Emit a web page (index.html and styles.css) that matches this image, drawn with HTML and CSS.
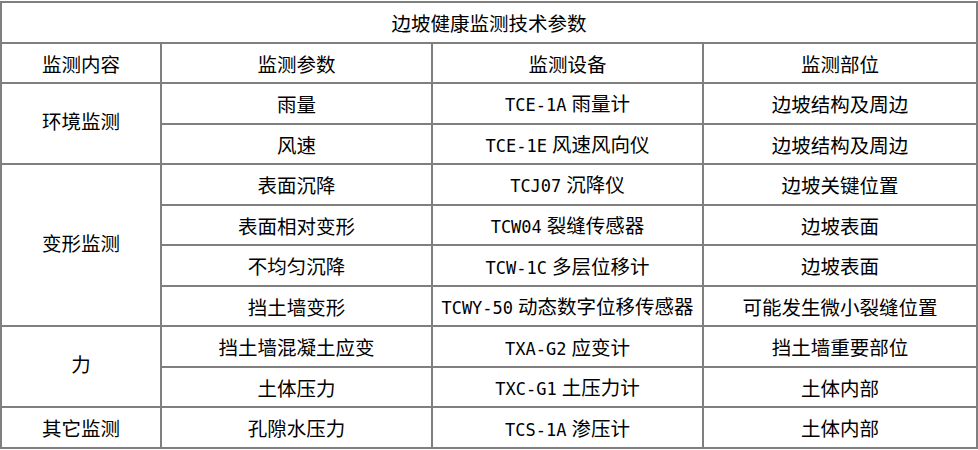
FILE: index.html
```html
<!DOCTYPE html>
<html lang="zh">
<head>
<meta charset="utf-8">
<title>边坡健康监测技术参数</title>
<link rel="stylesheet" href="styles.css">
</head>
<body>
<table class="params">
  <colgroup>
    <col class="c1"><col class="c2"><col class="c3"><col class="c4">
  </colgroup>
  <tr><td colspan="4" class="title">边坡健康监测技术参数</td></tr>
  <tr><td>监测内容</td><td>监测参数</td><td>监测设备</td><td>监测部位</td></tr>
  <tr><td rowspan="2" class="group">环境监测</td><td>雨量</td><td><span class="code">TCE-1A</span>雨量计</td><td>边坡结构及周边</td></tr>
  <tr><td>风速</td><td><span class="code">TCE-1E</span>风速风向仪</td><td>边坡结构及周边</td></tr>
  <tr><td rowspan="4" class="group">变形监测</td><td>表面沉降</td><td><span class="code">TCJ07</span>沉降仪</td><td>边坡关键位置</td></tr>
  <tr><td>表面相对变形</td><td><span class="code">TCW04</span>裂缝传感器</td><td>边坡表面</td></tr>
  <tr><td>不均匀沉降</td><td><span class="code">TCW-1C</span>多层位移计</td><td>边坡表面</td></tr>
  <tr><td>挡土墙变形</td><td><span class="code">TCWY-50</span>动态数字位移传感器</td><td>可能发生微小裂缝位置</td></tr>
  <tr><td rowspan="2" class="group">力</td><td>挡土墙混凝土应变</td><td><span class="code">TXA-G2</span>应变计</td><td>挡土墙重要部位</td></tr>
  <tr><td>土体压力</td><td><span class="code">TXC-G1</span>土压力计</td><td>土体内部</td></tr>
  <tr><td>其它监测</td><td>孔隙水压力</td><td><span class="code">TCS-1A</span>渗压计</td><td>土体内部</td></tr>
</table>
</body>
</html>
```
FILE: styles.css
```css
html, body {
  margin: 0;
  padding: 0;
  background: #ffffff;
}
body {
  padding-top: 1px;
  font-family: "Noto Sans CJK SC", "Noto Sans", sans-serif;
  color: #000000;
}
.params {
  border-collapse: collapse;
  width: 976px;
  table-layout: fixed;
  font-size: 19.5px;
  line-height: 1;
}
.c1 { width: 160px; }
.c2 { width: 271px; }
.c3 { width: 271px; }
.c4 { width: 274px; }
.params tr {
  height: 40.55px;
}
.params td {
  border: 2px solid #7f7f7f;
  padding: 1px 0 0 0;
  text-align: center;
  vertical-align: middle;
}
.params td.group {
  padding: 0 0 6px 0;
}
.code {
  font-family: "DejaVu Sans Mono", monospace;
  font-size: 17px;
  margin-right: 5px;
}
```
